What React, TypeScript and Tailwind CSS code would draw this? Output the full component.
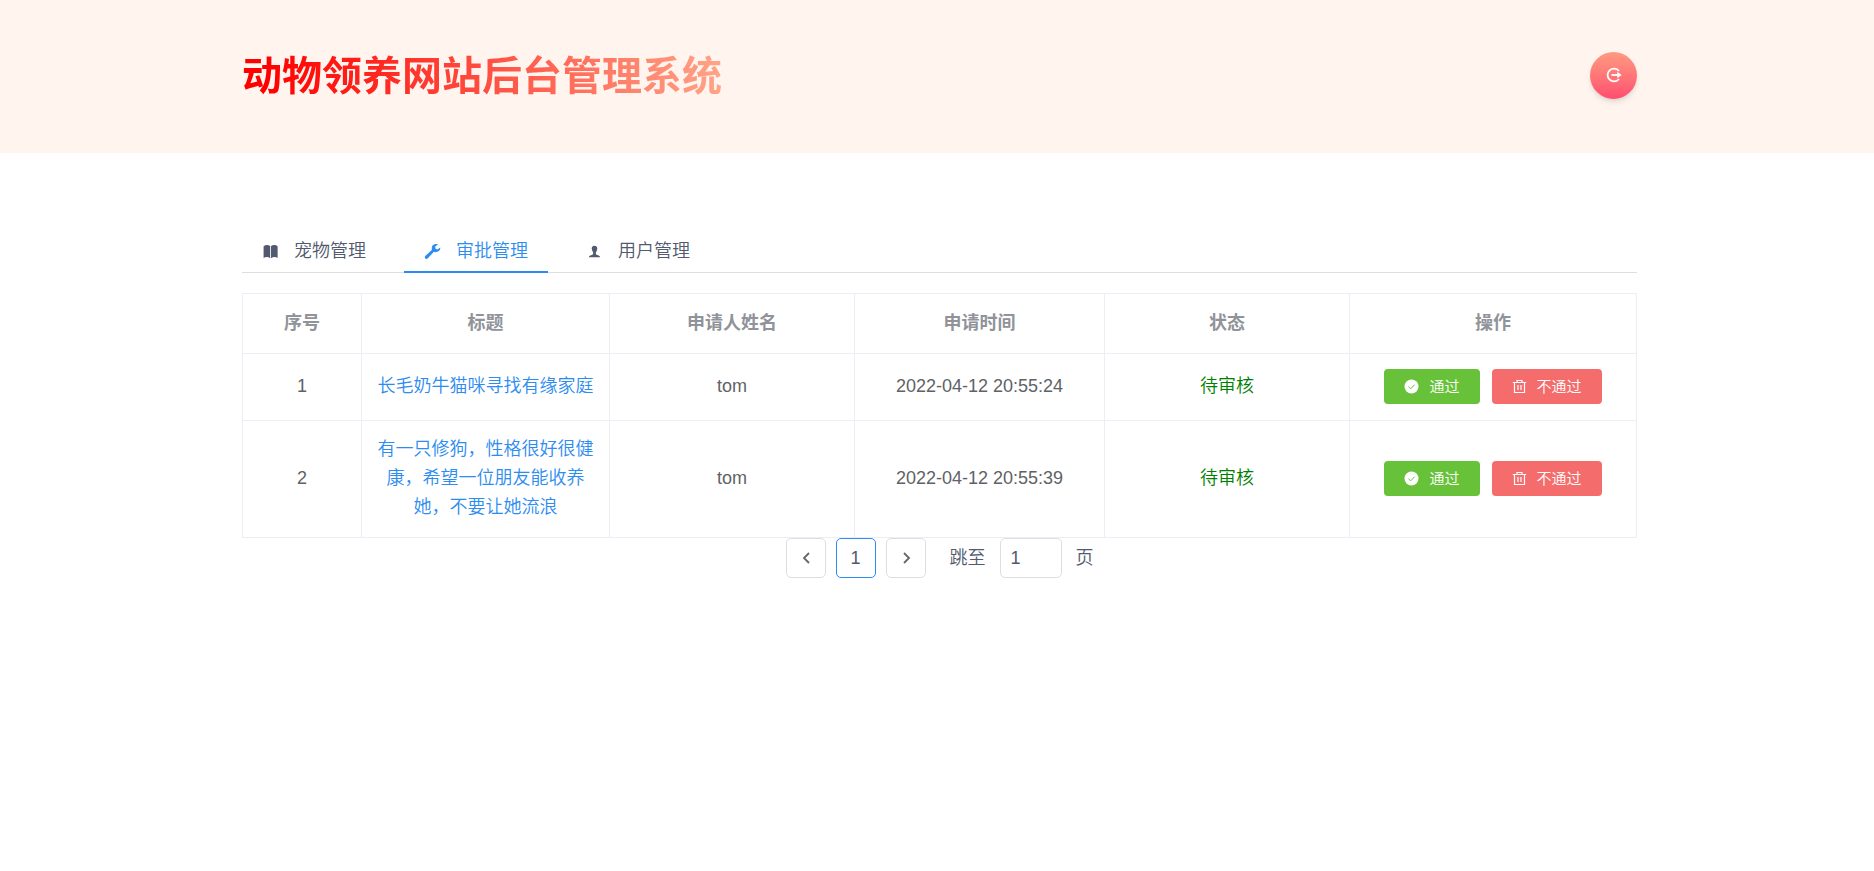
import { ReactNode, useState } from 'react'

const TABS = [
  { key: 'pet', label: '宠物管理', icon: <BookIcon /> },
  { key: 'audit', label: '审批管理', icon: <WrenchIcon /> },
  { key: 'user', label: '用户管理', icon: <PersonIcon /> },
]

const COLUMNS = [
  { title: '序号', width: 'w-[119px]' },
  { title: '标题', width: 'w-[248px]' },
  { title: '申请人姓名', width: 'w-[245px]' },
  { title: '申请时间', width: 'w-[250px]' },
  { title: '状态', width: 'w-[245px]' },
  { title: '操作', width: 'w-[287px]' },
]

const ROWS = [
  { id: 1, title: '长毛奶牛猫咪寻找有缘家庭', name: 'tom', time: '2022-04-12 20:55:24', status: '待审核' },
  { id: 2, title: '有一只修狗，性格很好很健康，希望一位朋友能收养她，不要让她流浪', name: 'tom', time: '2022-04-12 20:55:39', status: '待审核' },
]

const CELL = 'border border-[#ebeef5] pb-0.5'

function BookIcon() {
  return (
    <svg viewBox="0 0 16 16" className="size-[17px]" fill="currentColor" aria-hidden>
      <path d="M1.500 3C3.200 1.500 6 1.500 7.700 2.800V14.300C6 13 3.500 13 1.500 14Z" />
      <path d="M14.700 3C13 1.500 10.200 1.500 8.500 2.800V14.300C10.200 13 12.700 13 14.700 14Z" />
    </svg>
  )
}

function WrenchIcon() {
  return (
    <svg viewBox="0 0 16 16" className="size-[17px]" fill="currentColor" aria-hidden>
      <path d="M15.300 4.300 12.600 6.100 10.700 5.200 10.600 3.200 13.200 1.200C11.300.5 9 1 7.900 2.700 7.200 3.900 7.100 5.200 7.500 6.300L1.200 12.200C.6 12.900.6 13.900 1.200 14.600 1.900 15.200 3 15.100 3.600 14.400L9.300 8.300C10.700 8.900 12.600 8.700 13.900 7.600 14.900 6.800 15.400 5.500 15.300 4.300Z" />
    </svg>
  )
}

function PersonIcon() {
  return (
    <svg viewBox="0 0 16 16" className="size-[17px]" fill="currentColor" aria-hidden>
      <path d="M8 2.600C6.400 2.600 5.300 3.700 5.400 5.400 5.500 6.600 5.900 7.800 6.700 8.700V10.600C6.500 11.300 3 11.300 2.700 13.400H13.300C13 11.300 9.500 11.300 9.300 10.600V8.700C10.100 7.800 10.500 6.600 10.600 5.400 10.700 3.700 9.600 2.600 8 2.600Z" />
    </svg>
  )
}

function LogoutIcon() {
  return (
    <svg viewBox="0 0 16 16" className="size-4" fill="none" stroke="currentColor" strokeWidth="1.800" aria-hidden>
      <path d="M13 4A6.400 6.400 0 1 0 13 12" />
      <path d="M5.500 8H13" />
      <path d="M11.300 4.800 15.600 8 11.300 11.200Z" fill="currentColor" stroke="none" />
    </svg>
  )
}

function CheckIcon() {
  return (
    <svg viewBox="0 0 15 15" className="size-[15px]" aria-hidden>
      <circle cx="7.500" cy="7.500" r="7" fill="currentColor" />
      <path d="M4.500 7.800 6.700 9.800 10.700 5.700" fill="none" stroke="#67c23a" strokeWidth="1" />
    </svg>
  )
}

function TrashIcon() {
  return (
    <svg viewBox="0 0 15 15" className="size-[15px]" fill="none" stroke="currentColor" aria-hidden>
      <path d="M.8 3.500H14.200M5 3.300V1.500H10V3.300M2.500 3.500V13.500H12.500V3.500M6 6V11M9 6V11" strokeWidth="1.200" />
    </svg>
  )
}

function Chevron({ flip = false }: { flip?: boolean }) {
  return (
    <svg viewBox="0 0 16 16" className="size-4" fill="none" stroke="#666" strokeWidth="1.800" aria-hidden>
      <path d={flip ? 'M6 3 11 8 6 13' : 'M11 3 6 8 11 13'} />
    </svg>
  )
}

function ActionButton({ color, icon, children }: { color: string; icon: ReactNode; children: ReactNode }) {
  return (
    <button type="button" className={`flex h-[35px] items-center gap-2.5 rounded px-5 text-[15px] text-white ${color}`}>
      {icon}
      <span>{children}</span>
    </button>
  )
}

export default function App() {
  const [tab, setTab] = useState('audit')
  const [page, setPage] = useState('1')

  return (
    <div className="min-h-screen bg-white font-['Liberation_Sans','Noto_Sans_CJK_SC_DemiLight','Noto_Sans_CJK_SC_Light','Noto_Sans_CJK_SC',sans-serif] text-lg text-[#515a6e]">
      <header className="bg-[#fff4ee] pl-[5px]">
        <div className="mx-auto flex h-[153px] max-w-[1395px] items-center justify-between pb-[3px]">
          <h1 className="bg-linear-to-r/srgb from-[#ff0000] from-5% to-[#ffa488] bg-clip-text pt-0.5 font-['Liberation_Sans','Noto_Sans_CJK_SC',sans-serif] text-[40px] font-bold text-transparent">
            动物领养网站后台管理系统
          </h1>
          <button
            type="button"
            aria-label="退出登录"
            className="flex size-[47px] items-center justify-center rounded-full bg-linear-to-b from-[#ff9a80] to-[#ff4b70] text-white shadow-md"
          >
            <LogoutIcon />
          </button>
        </div>
      </header>

      <main className="pl-[5px] pt-[76px]">
        <div className="mx-auto max-w-[1395px]">
          <div role="tablist" className="flex gap-[18px] border-b border-[#dcdee2]">
            {TABS.map(t => (
              <button
                key={t.key}
                type="button"
                role="tab"
                aria-selected={tab === t.key}
                onClick={() => setTab(t.key)}
                className={`-mb-px flex h-11 items-center gap-[15px] border-b-2 px-5 pt-0.5 ${
                  tab === t.key ? 'border-[#2d8cf0] text-[#2d8cf0]' : 'border-transparent'
                }`}
              >
                {t.icon}
                <span>{t.label}</span>
              </button>
            ))}
          </div>

          <table className="mt-5 w-full table-fixed border-collapse text-center leading-[29px] text-[#606266]">
            <thead>
              <tr className="h-[60px] font-['Liberation_Sans','Noto_Sans_CJK_SC',sans-serif] text-[#909399]">
                {COLUMNS.map(c => (
                  <th key={c.title} className={`border border-[#ebeef5] font-bold ${c.width}`}>
                    {c.title}
                  </th>
                ))}
              </tr>
            </thead>
            <tbody>
              {ROWS.map(r => (
                <tr key={r.id} className="h-[67px]">
                  <td className={CELL}>{r.id}</td>
                  <td className="border border-[#ebeef5] px-3.5 pt-[14px] pb-[15px]">
                    <a href="#" className="text-[#2d8cf0]">{r.title}</a>
                  </td>
                  <td className={CELL}>{r.name}</td>
                  <td className={CELL}>{r.time}</td>
                  <td className={`${CELL} text-[#008000]`}>{r.status}</td>
                  <td className={CELL}>
                    <div className="flex justify-center gap-3">
                      <ActionButton color="bg-[#67c23a]" icon={<CheckIcon />}>通过</ActionButton>
                      <ActionButton color="bg-[#f56c6c]" icon={<TrashIcon />}>不通过</ActionButton>
                    </div>
                  </td>
                </tr>
              ))}
            </tbody>
          </table>

          <nav aria-label="分页" className="flex items-center justify-center gap-2.5">
            <button type="button" aria-label="上一页" className="flex size-10 items-center justify-center rounded-[5px] border border-[#dcdee2]">
              <Chevron />
            </button>
            <button type="button" aria-current="page" className="size-10 rounded-[5px] border border-[#2d8cf0]">
              1
            </button>
            <button type="button" aria-label="下一页" className="flex size-10 items-center justify-center rounded-[5px] border border-[#dcdee2]">
              <Chevron flip />
            </button>
            <label className="ml-3.5 flex items-center gap-3.5">
              跳至
              <input
                type="text"
                value={page}
                onChange={e => setPage(e.target.value)}
                className="h-10 w-[62px] rounded-[5px] border border-[#dcdee2] px-2.5"
              />
              页
            </label>
          </nav>
        </div>
      </main>
    </div>
  )
}
